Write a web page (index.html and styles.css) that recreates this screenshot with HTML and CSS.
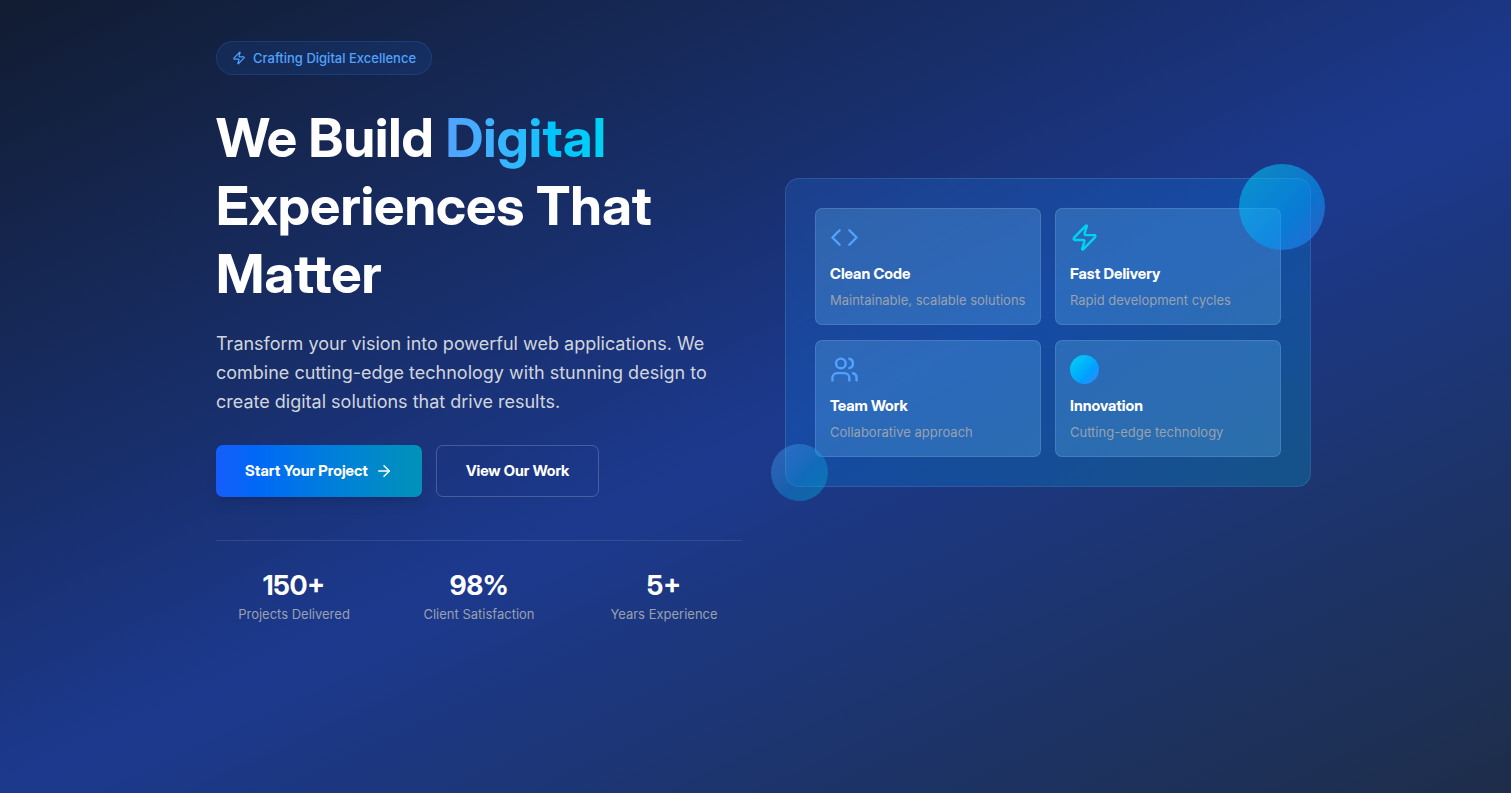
FILE: index.html
```html
<!DOCTYPE html>
<html lang="en">
<head>
<meta charset="utf-8">
<meta name="viewport" content="width=device-width, initial-scale=1">
<title>Digital Experiences</title>
<link rel="stylesheet" href="styles.css">
</head>
<body>
<main class="hero">
  <div class="container">
    <section class="intro">
      <div class="badge">
        <svg class="badge-icon" viewBox="0 0 24 24" aria-hidden="true"><path d="M4 14a1 1 0 0 1-.78-1.63l9.9-10.2a.5.5 0 0 1 .86.46l-1.92 6.02A1 1 0 0 0 13 10h7a1 1 0 0 1 .78 1.63l-9.9 10.2a.5.5 0 0 1-.86-.46l1.92-6.02A1 1 0 0 0 11 14z"/></svg>
        <span>Crafting Digital Excellence</span>
      </div>
      <h1 class="title">We Build <span class="title-accent">Digital</span> Experiences That Matter</h1>
      <p class="lead">Transform your vision into powerful web applications. We combine cutting-edge technology with stunning design to create digital solutions that drive results.</p>
      <div class="actions">
        <button type="button" class="button button-primary">Start Your Project
          <svg class="button-icon" viewBox="0 0 24 24" aria-hidden="true"><path d="M5 12h14"/><path d="m12 5 7 7-7 7"/></svg>
        </button>
        <button type="button" class="button button-outline">View Our Work</button>
      </div>
      <div class="stats">
        <div class="stat"><div class="stat-value">150+</div><div class="stat-label">Projects Delivered</div></div>
        <div class="stat"><div class="stat-value">98%</div><div class="stat-label">Client Satisfaction</div></div>
        <div class="stat"><div class="stat-value">5+</div><div class="stat-label">Years Experience</div></div>
      </div>
    </section>
    <section class="panel">
      <div class="cards">
        <article class="card">
          <svg class="card-icon blue" viewBox="0 0 24 24" aria-hidden="true"><path d="m16 18 6-6-6-6"/><path d="m8 6-6 6 6 6"/></svg>
          <h2 class="card-title">Clean Code</h2>
          <p class="card-text">Maintainable, scalable solutions</p>
        </article>
        <article class="card">
          <svg class="card-icon cyan" viewBox="0 0 24 24" aria-hidden="true"><path d="M4 14a1 1 0 0 1-.78-1.63l9.9-10.2a.5.5 0 0 1 .86.46l-1.92 6.02A1 1 0 0 0 13 10h7a1 1 0 0 1 .78 1.63l-9.9 10.2a.5.5 0 0 1-.86-.46l1.92-6.02A1 1 0 0 0 11 14z"/></svg>
          <h2 class="card-title">Fast Delivery</h2>
          <p class="card-text">Rapid development cycles</p>
        </article>
        <article class="card">
          <svg class="card-icon blue" viewBox="0 0 24 24" aria-hidden="true"><path d="M16 21v-2a4 4 0 0 0-4-4H6a4 4 0 0 0-4 4v2"/><circle cx="9" cy="7" r="4"/><path d="M16 3.128a4 4 0 0 1 0 7.744"/><path d="M22 21v-2a4 4 0 0 0-3-3.87"/></svg>
          <h2 class="card-title">Team Work</h2>
          <p class="card-text">Collaborative approach</p>
        </article>
        <article class="card">
          <div class="card-icon dot"></div>
          <h2 class="card-title">Innovation</h2>
          <p class="card-text">Cutting-edge technology</p>
        </article>
      </div>
      <div class="orb orb-large"></div>
      <div class="orb orb-small"></div>
    </section>
  </div>
</main>
</body>
</html>
```
FILE: styles.css
```css
*, *::before, *::after { box-sizing: border-box; }
body, h1, h2, p { margin: 0; }
:root {
  --display: "Inter Display", Inter, "Liberation Sans", sans-serif;
}
body {
  font-family: Inter, "Liberation Sans", sans-serif;
  font-size: 13px;
  line-height: 20px;
  color: #fff;
  background: #101828;
}
svg { fill: none; stroke: currentColor; stroke-width: 2; stroke-linecap: round; stroke-linejoin: round; }
.hero {
  min-height: 100vh;
  padding: 41px 29px 41px 45px;
  background: linear-gradient(155deg in oklab, #101828 -6%, #1c398e 53%, #1e2939 112%);
}
.container {
  display: grid;
  grid-template-columns: 1fr 1fr;
  gap: 43px;
  align-items: center;
  max-width: 1095px;
  margin: 0 auto;
}
.badge {
  display: inline-flex;
  align-items: center;
  gap: 7px;
  padding: 6px 15px;
  border: 1px solid rgba(43, 127, 255, .2);
  border-radius: 999px;
  background: rgba(43, 127, 255, .1);
  color: #51a2ff;
  font-weight: 500;
}
.badge-icon { width: 14px; height: 14px; }
.title {
  margin-top: 29px;
  font-family: var(--display);
  font-size: 54px;
  line-height: 68px;
  font-weight: 700;
}
.title-accent {
  background: linear-gradient(to right in oklab, #51a2ff, #00c3ff 65%, #00d3f2);
  background-clip: text;
  color: transparent;
}
.lead {
  margin-top: 21px;
  font-size: 18px;
  line-height: 29px;
  color: #d1d5dc;
}
.actions { display: flex; gap: 14px; margin-top: 29px; }
.button {
  display: inline-flex;
  align-items: center;
  gap: 7px;
  padding: 15px 29px;
  border: 1px solid transparent;
  border-radius: 7px;
  background: transparent;
  color: #fff;
  font: 700 15px/20px var(--display);
  cursor: pointer;
}
.button-primary {
  border: 0;
  padding: 16px 29px;
  background: linear-gradient(to right in oklab, #155dfc, #0068f7 20%, #0092b8);
  box-shadow: 0 9px 14px -3px rgba(0, 0, 0, .1), 0 4px 5px -4px rgba(0, 0, 0, .1);
}
.button-outline { border-color: rgba(255, 255, 255, .2); }
.button-icon { width: 18px; height: 18px; }
.stats {
  display: grid;
  grid-template-columns: repeat(3, 1fr);
  gap: 29px;
  margin-top: 43px;
  padding-top: 29px;
  border-top: 1px solid rgba(255, 255, 255, .1);
  text-align: center;
}
.stat-value {
  font-family: var(--display);
  font-size: 27px;
  line-height: 32px;
  font-weight: 700;
}
.stat-label { margin-top: 2px; color: #99a1af; }
.panel {
  position: relative;
  padding: 29px;
  border: 1px solid rgba(255, 255, 255, .1);
  border-radius: 14px;
  background: linear-gradient(to bottom right in oklab, rgba(43, 127, 255, .2), rgba(0, 130, 230, .25) 50%, rgba(0, 184, 219, .23));
}
.cards { display: grid; grid-template-columns: 1fr 1fr; gap: 15px 14px; }
.card {
  padding: 14px;
  border: 1px solid rgba(255, 255, 255, .12);
  border-radius: 7px;
  background: rgba(100, 188, 248, .28);
}
.card-icon { display: block; width: 29px; height: 29px; margin-bottom: 12px; }
.blue { color: #51a2ff; }
.cyan { color: #00d3f2; }
.dot { border-radius: 50%; background: linear-gradient(to bottom right in oklab, #00d3f2, #009fff 65%, #2b7fff); }
.card-title {
  font-family: var(--display);
  font-size: 15px;
  line-height: 20px;
  font-weight: 700;
}
.card-text { margin-top: 6px; color: #99a1af; }
.orb { position: absolute; border-radius: 50%; }
.orb-large {
  top: -15px;
  right: -15px;
  width: 86px;
  height: 86px;
  background: linear-gradient(to bottom right in oklab, #00d3f2, #009fff 65%, #2b7fff);
  opacity: .55;
}
.orb-small {
  bottom: -15px;
  left: -15px;
  width: 57px;
  height: 57px;
  background: linear-gradient(to bottom right in oklab, #51a2ff, #0a9be4 55%, #00b8db);
  opacity: .4;
}
```
